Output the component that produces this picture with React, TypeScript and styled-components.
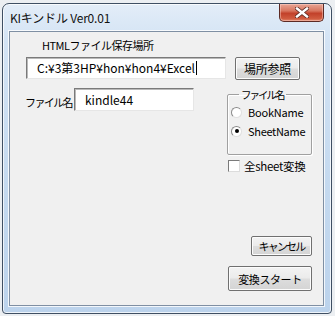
import React from "react";
import styled, { createGlobalStyle } from "styled-components";

const Global = createGlobalStyle`
  html, body { margin: 0; padding: 0; }
  body {
    background: #eceff2;
    font-family: "Noto Sans CJK JP", "Noto Sans", sans-serif;
    font-size: 12px;
    color: #000;
  }
`;

const Page = styled.div`
  width: 335px;
  height: 316px;
  padding: 3px 0 0 2px;
  box-sizing: border-box;
`;

const Window = styled.div`
  width: 330px;
  height: 311px;
  box-sizing: border-box;
  border: 1px solid #3f4f63;
  border-radius: 7px 7px 4px 4px;
  background: linear-gradient(180deg, #e3edf8 0%, #d3e3f4 12%, #c4d9ef 60%, #bcd3ec 100%);
  box-shadow: inset 0 0 0 1px rgba(255, 255, 255, 0.75);
  display: flex;
  flex-direction: column;
  padding: 0 7px 7px 6px;
`;

const TitleBar = styled.div`
  height: 27px;
  display: flex;
  align-items: flex-start;
  justify-content: space-between;
  flex-shrink: 0;
`;

const Title = styled.div`
  padding: 7px 0 0 1px;
  font-size: 12px;
  line-height: 14px;
  letter-spacing: -0.2px;
  color: #111;
`;

const CloseButton = styled.div`
  width: 45px;
  height: 18px;
  box-sizing: border-box;
  border: 1px solid #5c2a24;
  border-top: none;
  border-radius: 0 0 5px 5px;
  background: linear-gradient(180deg, #e8a595 0%, #d8765f 40%, #c2412a 55%, #cf5a3e 85%, #e2866b 100%);
  box-shadow: inset 0 0 0 1px rgba(255, 220, 210, 0.45);
  display: flex;
  align-items: center;
  justify-content: center;
`;

const Client = styled.div`
  flex: 1;
  border: 1px solid #7f8fa3;
  box-shadow: 0 0 0 1px rgba(255, 255, 255, 0.8);
  background: #f0f0f0;
  display: flex;
  flex-direction: column;
  padding: 6px 0 0 15px;
`;

const Text = styled.span<{ $size: number; $ls: number }>`
  font-size: ${(p) => p.$size}px;
  letter-spacing: ${(p) => p.$ls}px;
  white-space: nowrap;
`;

const SectionLabel = styled.div`
  margin-left: 17px;
  line-height: 14px;
  height: 14px;
`;

const PathRow = styled.div`
  display: flex;
  align-items: flex-start;
  margin-top: 5px;
  gap: 9px;
`;

const TextBox = styled.div<{ $w: number; $h: number }>`
  width: ${(p) => p.$w}px;
  height: ${(p) => p.$h}px;
  box-sizing: border-box;
  background: #fff;
  border-top: 1px solid #7a7a7a;
  border-left: 1px solid #7a7a7a;
  border-right: 1px solid #e6e6e6;
  border-bottom: 1px solid #e6e6e6;
  box-shadow: inset 1px 1px 0 #b9b9b9;
  padding: 0 0 0 10px;
  display: flex;
  align-items: center;
  line-height: 14px;
  white-space: nowrap;
  overflow: hidden;
`;

const Caret = styled.span`
  display: inline-block;
  width: 1px;
  height: 14px;
  background: #000;
  margin-left: 1px;
`;

const Button = styled.div<{ $w: number; $h: number }>`
  width: ${(p) => p.$w}px;
  height: ${(p) => p.$h}px;
  box-sizing: border-box;
  border: 1px solid #707070;
  border-radius: 2px;
  background: linear-gradient(180deg, #f3f3f3 0%, #ebebeb 48%, #dddddd 52%, #d4d4d4 100%);
  box-shadow: inset 0 0 0 1px #fcfcfc;
  display: flex;
  align-items: center;
  justify-content: center;
  line-height: 14px;
  white-space: nowrap;
`;

const Lower = styled.div`
  display: flex;
  margin-top: 7px;
`;

const LeftCol = styled.div`
  display: flex;
  align-items: flex-start;
  margin-top: 1px;
  width: 202px;
`;

const FieldLabel = styled.div`
  width: 49px;
  padding-top: 7px;
  line-height: 14px;
`;

const RightCol = styled.div`
  width: 85px;
  display: flex;
  flex-direction: column;
  align-items: flex-end;
`;

const Group = styled.fieldset`
  width: 85px;
  height: 68px;
  box-sizing: border-box;
  margin: 0;
  padding: 3px 0 0 3px;
  border: 1px solid #a0a0a0;
  border-radius: 2px;
  box-shadow: inset 1px 1px 0 #ffffff, 1px 1px 0 #ffffff;
  display: flex;
  flex-direction: column;
  gap: 5px;
  align-self: stretch;
`;

const Legend = styled.legend`
  margin-left: 8px;
  padding: 0 2px;
  line-height: 14px;
`;

const OptionRow = styled.div`
  display: flex;
  align-items: center;
  height: 14px;
  line-height: 14px;
`;

const RadioDot = styled.span<{ $checked?: boolean }>`
  width: 11px;
  height: 11px;
  box-sizing: border-box;
  border-radius: 50%;
  border: 1px solid #8a8a8a;
  border-right-color: #e0e0e0;
  border-bottom-color: #e0e0e0;
  background: #fff;
  margin-right: 6px;
  display: flex;
  align-items: center;
  justify-content: center;
  &::after {
    content: "";
    display: ${(p) => (p.$checked ? "block" : "none")};
    width: 4px;
    height: 4px;
    border-radius: 50%;
    background: #000;
  }
`;

const CheckRow = styled.div`
  display: flex;
  align-items: center;
  align-self: stretch;
  margin-top: 5px;
  margin-left: 1px;
  height: 12px;
  line-height: 14px;
`;

const CheckBox = styled.span`
  width: 12px;
  height: 12px;
  box-sizing: border-box;
  border: 1px solid #7a7a7a;
  border-right-color: #dcdcdc;
  border-bottom-color: #dcdcdc;
  background: #fff;
  margin-right: 4px;
`;

const CancelSlot = styled.div`
  margin-top: 64px;
`;

const StartSlot = styled.div`
  margin-top: 10px;
`;

function CloseIcon() {
  return (
    <svg width="14" height="11" viewBox="0 0 14 11">
      <path d="M2 1.5 L12 9.5 M12 1.5 L2 9.5" stroke="#5a2a22" strokeWidth="4" strokeLinecap="square" />
      <path d="M2 1.5 L12 9.5 M12 1.5 L2 9.5" stroke="#ffffff" strokeWidth="2.4" strokeLinecap="square" />
    </svg>
  );
}

export default function App() {
  return (
    <>
      <Global />
      <Page>
        <Window>
          <TitleBar>
            <Title>KIキンドル Ver0.01</Title>
            <CloseButton>
              <CloseIcon />
            </CloseButton>
          </TitleBar>
          <Client>
            <SectionLabel>
              <Text $size={11} $ls={-0.5}>HTMLファイル保存場所</Text>
            </SectionLabel>
            <PathRow>
              <TextBox $w={200} $h={22} style={{ marginLeft: 1 }}>
                C:¥3第3HP¥hon¥hon4¥Excel
                <Caret />
              </TextBox>
              <Button $w={65} $h={23}>
                <Text $size={12} $ls={-0.3}>場所参照</Text>
              </Button>
            </PathRow>
            <Lower>
              <LeftCol>
                <FieldLabel>
                  <Text $size={11} $ls={-1.6}>ファイル名</Text>
                </FieldLabel>
                <TextBox $w={120} $h={23}>kindle44</TextBox>
              </LeftCol>
              <RightCol>
                <Group>
                  <Legend>
                    <Text $size={10.5} $ls={-2}>ファイル名</Text>
                  </Legend>
                  <OptionRow>
                    <RadioDot />
                    <Text $size={11} $ls={-0.2}>BookName</Text>
                  </OptionRow>
                  <OptionRow>
                    <RadioDot $checked />
                    <Text $size={11} $ls={-0.3}>SheetName</Text>
                  </OptionRow>
                </Group>
                <CheckRow>
                  <CheckBox />
                  <Text $size={11.5} $ls={-0.3}>全sheet変換</Text>
                </CheckRow>
                <CancelSlot>
                  <Button $w={61} $h={20}>
                    <Text $size={11} $ls={-1.8}>キャンセル</Text>
                  </Button>
                </CancelSlot>
                <StartSlot>
                  <Button $w={84} $h={25}>
                    <Text $size={11} $ls={-0.4}>変換スタート</Text>
                  </Button>
                </StartSlot>
              </RightCol>
            </Lower>
          </Client>
        </Window>
      </Page>
    </>
  );
}
